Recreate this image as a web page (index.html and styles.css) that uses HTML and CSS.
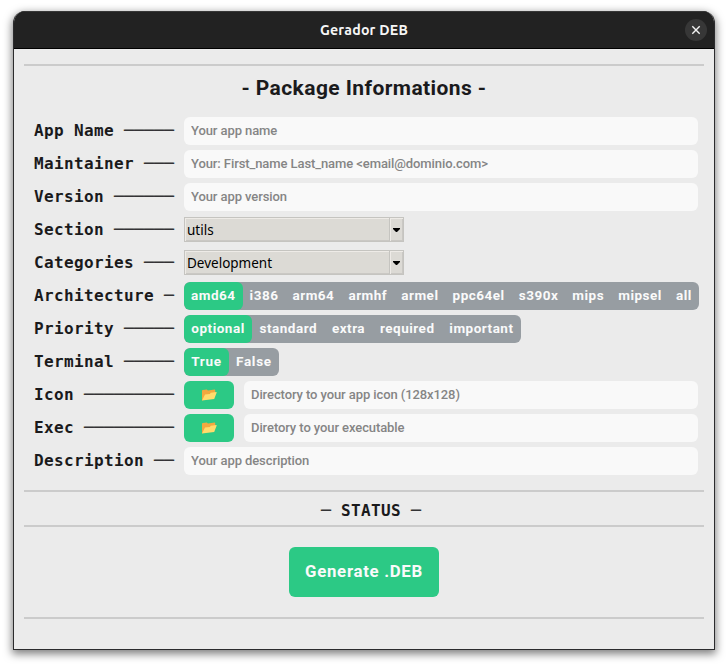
FILE: index.html
```html
<!DOCTYPE html>
<html lang="en">
<head>
<meta charset="utf-8">
<title>Gerador DEB</title>
<link rel="stylesheet" href="styles.css">
</head>
<body>
<div class="window">
  <header class="titlebar">
    <span class="title">Gerador DEB</span>
    <button class="close" aria-label="Close"><svg width="22" height="22" viewBox="0 0 22 22"><path d="M7.3 7.3l7.4 7.4M14.7 7.3l-7.4 7.4"/></svg></button>
  </header>
  <main class="content">
    <hr class="rule">
    <h1 class="heading">- Package Informations -</h1>
    <form class="form">
      <div class="row"><label>App Name <span class="dash">─────</span></label><input placeholder="Your app name"></div>
      <div class="row"><label>Maintainer <span class="dash">───</span></label><input placeholder="Your: First_name Last_name &lt;email@dominio.com&gt;"></div>
      <div class="row"><label>Version <span class="dash">──────</span></label><input placeholder="Your app version"></div>
      <div class="row"><label>Section <span class="dash">──────</span></label><div class="combo"><span class="value">utils</span><span class="arrow"><svg width="7" height="4" viewBox="0 0 7 4"><path d="M0 0h7v1L4 4H3L0 1z"/></svg></span></div></div>
      <div class="row"><label>Categories <span class="dash">───</span></label><div class="combo"><span class="value">Development</span><span class="arrow"><svg width="7" height="4" viewBox="0 0 7 4"><path d="M0 0h7v1L4 4H3L0 1z"/></svg></span></div></div>
      <div class="row"><label>Architecture <span class="dash">─</span></label><div class="segments arch"><span class="on">amd64</span><span>i386</span><span>arm64</span><span>armhf</span><span>armel</span><span>ppc64el</span><span>s390x</span><span>mips</span><span>mipsel</span><span>all</span></div></div>
      <div class="row"><label>Priority <span class="dash">─────</span></label><div class="segments priority"><span class="on">optional</span><span>standard</span><span>extra</span><span>required</span><span>important</span></div></div>
      <div class="row"><label>Terminal <span class="dash">─────</span></label><div class="segments terminal"><span class="on">True</span><span>False</span></div></div>
      <div class="row"><label>Icon <span class="dash">─────────</span></label><button type="button" class="browse" aria-label="Browse"><svg width="16" height="14" viewBox="0 0 16 14"><path fill="#f2a83f" d="M1 12.4V2.6l.7-.6 4.2-.4 1 .9 6.8-1 .5.5v5z"/><path fill="#ffdc6c" d="M1 12.6l3-6.1 4.8-.5 1-1.3 5.6-.7.3.5-2.5 6.6z"/></svg></button><input placeholder="Directory to your app icon (128x128)"></div>
      <div class="row"><label>Exec <span class="dash">─────────</span></label><button type="button" class="browse" aria-label="Browse"><svg width="16" height="14" viewBox="0 0 16 14"><path fill="#f2a83f" d="M1 12.4V2.6l.7-.6 4.2-.4 1 .9 6.8-1 .5.5v5z"/><path fill="#ffdc6c" d="M1 12.6l3-6.1 4.8-.5 1-1.3 5.6-.7.3.5-2.5 6.6z"/></svg></button><input placeholder="Diretory to your executable"></div>
      <div class="row"><label>Description <span class="dash">──</span></label><input placeholder="Your app description"></div>
    </form>
    <hr class="rule">
    <div class="status"><span class="dash">─</span> STATUS <span class="dash">─</span></div>
    <hr class="rule">
    <button class="generate">Generate .DEB</button>
    <hr class="rule">
  </main>
</div>
</body>
</html>
```
FILE: styles.css
```css
* { box-sizing: border-box; }
body { margin: 0; padding: 11px 13px 16px; background: #fff; }
button { border: 0; padding: 0; font: inherit; }
.window {
  width: 702px; height: 639px; overflow: hidden;
  border: 1px solid #2b2b2d; border-top: 0;
  border-radius: 12px 12px 0 0; background: #ebebeb;
  box-shadow: 0 3px 9px 1px rgba(0, 0, 0, .5);
}
.titlebar {
  display: grid; grid-template-columns: 1fr auto 1fr; align-items: center;
  height: 38px; padding: 0 7px; background: #222;
  border-top: 1px solid #373737; border-bottom: 1px solid #000;
}
.title {
  grid-column: 2; color: #f6f6f6; letter-spacing: .2px;
  font: 600 14.2px/20px Ubuntu, "Noto Sans", sans-serif;
}
.close {
  justify-self: end; width: 22px; height: 22px;
  border-radius: 50%; background: #373737;
}
.close svg { display: block; fill: none; stroke: #f4f4f4; stroke-width: 1.4; }
.content { padding: 15px 10px 0; color: #1a1a1c; }
.rule { height: 2px; margin: 0; border: 0; background: #cbcbcb; }
.heading {
  margin: 0; height: 49px; padding-top: 8px; text-align: center;
  font: 700 21px/28px Roboto, sans-serif; letter-spacing: .42px;
}
.form { display: grid; gap: 5px; padding: 2px 6px 15px 10px; }
.row { display: flex; align-items: center; height: 28px; }
label, .status {
  font: 700 16px/28px "DejaVu Sans Mono", monospace;
  letter-spacing: .367px; white-space: pre;
}
label { width: 150px; flex: none; }
.dash { font-size: 16.61px; font-weight: 400; letter-spacing: 0; color: #333335; }
input {
  flex: 1; min-width: 0; height: 28px; padding: 0 7px;
  border: 0; border-radius: 6px; background: #f9f9f9;
  font: 500 13px/28px Roboto, sans-serif; letter-spacing: -.09px;
}
input::placeholder { color: #858585; opacity: 1; }
.combo {
  display: flex; width: 220px; height: 25px; margin-bottom: 1px;
  border: 1px solid #c5c4c0; background: #dcdad5;
  box-shadow: inset 1px 1px #eeebe7, inset -1px -1px #cac8c4; color: #000;
  font: 13.5px/23px "Noto Sans", sans-serif;
}
.value { flex: 1; padding: 1px 0 0 2px; }
.arrow {
  display: flex; align-items: center; justify-content: center; width: 14px;
  border-left: 1px solid #c5c4c0; box-shadow: inset 1px 1px #eeebe7;
}
.arrow svg { margin-top: 1px; }
.segments {
  display: flex; height: 28px; flex: none; overflow: hidden;
  border-radius: 6px; background: #979da2; color: #fafafa;
  font: 700 13.5px/27px Roboto, sans-serif; letter-spacing: .5px;
}
.arch { width: 515px; margin-right: -1px; }
.priority { width: 337px; }
.terminal { width: 95px; letter-spacing: .7px; }
.segments span { flex: 1 0 auto; padding: 0 6.5px 0 6.4px; text-align: center; }
.segments .on { background: #2cc985; border-radius: 6px; }
.browse {
  display: flex; align-items: center; justify-content: center;
  width: 50px; height: 28px; margin-right: 10px;
  border-radius: 6px; background: #2cc985;
}
.status { height: 33px; padding: 5px 0 0 14px; text-align: center; }
.generate {
  display: block; width: 150px; height: 50px; margin: 20px auto;
  border-radius: 6px; background: #2cc985; color: #fafafa;
  font: 700 16.8px/48px Roboto, sans-serif; letter-spacing: .7px;
  padding-bottom: 2px;
}
```
